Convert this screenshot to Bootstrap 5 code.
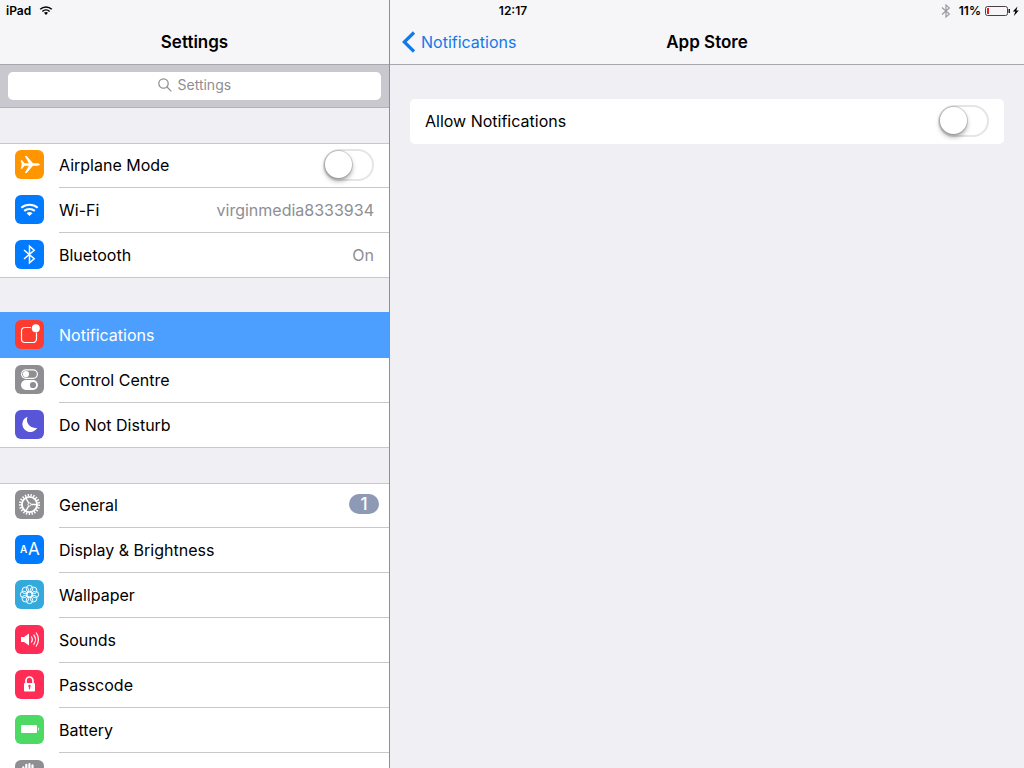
<!DOCTYPE html>
<html lang="en-GB">
<head>
<meta charset="utf-8">
<meta name="viewport" content="width=device-width, initial-scale=1">
<title>Settings</title>
<link href="https://cdn.jsdelivr.net/npm/bootstrap@5.3.0/dist/css/bootstrap.min.css" rel="stylesheet">
<style>
  body { font-family: Inter, Roboto, "Liberation Sans", sans-serif; font-size: 16px; line-height: 20px; color: #000; background: #efeff4; }
  .app { height: 100vh; }
  .status-bar { height: 21px; font-size: 12px; font-weight: 600; z-index: 5; padding: 0 4px 0 6px; }
  .status-bar > div { flex: 1 1 0; }
  .sidebar { flex: 0 0 390px; max-width: 50%; border-right: 1px solid #8e8e93; }
  .title-bar { height: 65px; padding-top: 20px; background: #f6f6f8; border-bottom: 1px solid #a7a7ac; flex: none; }
  .title-bar h1 { font-size: 17px; line-height: 20px; font-weight: 600; }
  .title-bar .back { color: #1279e8; left: 12px; }
  .search-bar { height: 43px; padding: 7px 8px; background: #c9c8ce; border-bottom: 1px solid #b3b2b8; flex: none; }
  .search-box { height: 28px; padding-bottom: 2px; background: #fff; border-radius: 5px; color: #8e8e93; gap: 6px; }
  .search-box input { width: 54px; padding: 0; border: 0; outline: 0; background: none; font-size: 14px; line-height: 16px; }
  .search-box input::placeholder { color: #8e8e93; opacity: 1; }
  .menu { overflow-y: auto; scrollbar-width: none; padding-top: 35px; }
  .menu::-webkit-scrollbar { display: none; }
  .menu-group { margin-bottom: 35px; background: #fff; box-shadow: inset 0 1px #c8c7cc, inset 0 -1px #c8c7cc; flex: none; }
  .menu-row { height: 45px; padding-left: 15px; gap: 15px; color: #000; text-decoration: none; }
  .menu-row > svg { flex: none; margin-bottom: 2px; }
  .row-body { height: 45px; padding-right: 15px; border-bottom: 1px solid #c8c7cc; min-width: 0; }
  .menu-row:last-child .row-body { border-color: transparent; }
  .menu-row.chosen { background: #4c9fff; color: #fff; box-shadow: 0 -1px #4c9fff; }
  .menu-row.chosen .row-body { border-color: #4c9fff; }
  .row-value { color: #8e8e93; }
  .row-body.has-count { padding-right: 10px; }
  .count { width: 30px; height: 20px; padding: 0; line-height: 20px; font-size: 17px; font-weight: 500; background: #8e9ab5; margin-bottom: 2px; }
  .detail { padding: 34px 20px; }
  .setting { height: 45px; padding: 0 15px 1px; background: #fff; border-radius: 5px; }
  .form-switch .form-check-input.toggle { width: 51px; height: 32px; margin: 0; float: none; border: 2px solid #e5e5e5; border-radius: 16px; background: #fff; position: relative; box-shadow: none; }
  .toggle::before { content: ""; position: absolute; left: 0; top: 0; width: 27px; height: 27px; border-radius: 50%; background: #fff; box-shadow: 0 0 0 1px rgba(0,0,0,.15), 0 3px 5px rgba(0,0,0,.35); }
  .form-switch .form-check-input.toggle:checked { background: #4cd964; border-color: #4cd964; }
  .toggle:checked::before { left: 20px; }
</style>
</head>
<body>
<div class="app d-flex position-relative overflow-hidden">

  <div class="status-bar position-absolute top-0 start-0 w-100 d-flex align-items-center">
    <div class="d-flex align-items-center gap-1">
      <span>iPad</span>
      <svg class="ms-1" width="14" height="11" viewBox="0 0 15 11" fill="none" stroke="#000" stroke-width="1.600"><path d="M1.300 4.200a9 9 0 0 1 12.400 0M3.600 6.500a5.700 5.700 0 0 1 7.800 0"/><path d="M5.300 8a3.400 3.400 0 0 1 4.400 0L7.500 10.300z" fill="#000" stroke="none"/></svg>
    </div>
    <time class="px-2">12:17</time>
    <div class="d-flex align-items-center justify-content-end">
      <svg class="me-1" width="10" height="14" viewBox="0 0 10 14" fill="none" stroke="#9b9b9f" stroke-width="1.200"><path d="M1 3.500l7.300 6.600L5 13V1l3.300 2.900L1 10.500"/></svg>
      <span class="ms-1">11%</span>
      <svg class="ms-1" width="35" height="12" viewBox="0 0 35 12"><rect x=".5" y="1.500" width="22" height="9" rx="2" fill="none" stroke="#4a3f42"/><rect x="2" y="3" width="2" height="6" fill="#d8232a"/><path d="M23.500 4h1.500v4h-1.500z" fill="#222"/><path d="M32.500 1.500l-4.700 5h2.500l-1.500 4.500 5-5.500h-2.500z" fill="#000"/></svg>
    </div>
  </div>

  <nav class="sidebar d-flex flex-column" aria-label="Settings">
    <header class="title-bar d-flex align-items-center justify-content-center"><h1 class="m-0">Settings</h1></header>
    <div class="search-bar">
      <label class="search-box d-flex align-items-center justify-content-center">
        <svg width="14" height="14" viewBox="0 0 14 14" fill="none" stroke="#8e8e93" stroke-width="1.200"><circle cx="5.500" cy="5.500" r="4.700"/><path d="M9 9l4.300 4.300"/></svg>
        <input type="text" placeholder="Settings" aria-label="Search settings">
      </label>
    </div>

    <div class="menu d-flex flex-column flex-grow-1">
      <div class="menu-group">
        <div class="menu-row d-flex align-items-center">
          <svg width="29" height="29" viewBox="0 0 29 29"><rect width="29" height="29" rx="6" fill="#ff9500"/><path fill="#fff" d="M5.700 10.200h1.400l2.500 3.100h4.200L9.800 6h1.900l6.300 7.300h4.300c1.500 0 2.600.6 2.600 1.200s-1.100 1.200-2.600 1.200H18L11.700 23H9.800l4-7.300H9.600l-2.500 3.100H5.700l1-4.300z"/></svg>
          <div class="row-body form-switch d-flex flex-grow-1 align-items-center justify-content-between ps-0">
            <label for="airplane">Airplane Mode</label>
            <input class="form-check-input toggle" type="checkbox" role="switch" id="airplane">
          </div>
        </div>
        <a href="#" class="menu-row d-flex align-items-center">
          <svg width="29" height="29" viewBox="0 0 29 29"><rect width="29" height="29" rx="6" fill="#007aff"/><g fill="none" stroke="#fff" stroke-width="2.100"><path d="M6.300 12.800a12.600 12.600 0 0 1 16.400 0M9.200 15.900a8.200 8.200 0 0 1 10.600 0"/></g><path fill="#fff" d="M11.500 18.200a4.700 4.700 0 0 1 6 0l-3 2.900z"/></svg>
          <div class="row-body d-flex flex-grow-1 align-items-center justify-content-between"><span>Wi-Fi</span><span class="row-value">virginmedia8333934</span></div>
        </a>
        <a href="#" class="menu-row d-flex align-items-center">
          <svg width="29" height="29" viewBox="0 0 29 29"><rect width="29" height="29" rx="6" fill="#007aff"/><path fill="none" stroke="#fff" stroke-width="1.500" d="M9 10l10.200 8.800-4.700 4V6.200l4.700 4L9 19"/></svg>
          <div class="row-body d-flex flex-grow-1 align-items-center justify-content-between"><span>Bluetooth</span><span class="row-value">On</span></div>
        </a>
      </div>

      <div class="menu-group">
        <a href="#" class="menu-row chosen d-flex align-items-center" aria-current="page">
          <svg width="29" height="29" viewBox="0 0 29 29"><rect width="29" height="29" rx="6" fill="#ff3b30"/><path fill="none" stroke="#fff" stroke-width="1.200" d="M16 7.500H10a3.500 3.500 0 0 0-3.500 3.500v8a3.500 3.500 0 0 0 3.500 3.500h8a3.500 3.500 0 0 0 3.500-3.500v-6.500"/><circle cx="20.800" cy="8.200" r="4" fill="#fff"/></svg>
          <div class="row-body d-flex flex-grow-1 align-items-center"><span>Notifications</span></div>
        </a>
        <a href="#" class="menu-row d-flex align-items-center">
          <svg width="29" height="29" viewBox="0 0 29 29"><rect width="29" height="29" rx="6" fill="#8e8e93"/><rect x="6.600" y="4.800" width="15.800" height="8.600" rx="4.300" fill="none" stroke="#fff" stroke-width="1.200"/><circle cx="11" cy="9.100" r="3.100" fill="#fff"/><rect x="6" y="15" width="17" height="10" rx="5" fill="#fff"/><circle cx="18" cy="20" r="3.100" fill="#8e8e93"/></svg>
          <div class="row-body d-flex flex-grow-1 align-items-center"><span>Control Centre</span></div>
        </a>
        <a href="#" class="menu-row d-flex align-items-center">
          <svg width="29" height="29" viewBox="0 0 29 29"><rect width="29" height="29" rx="6" fill="#5856d6"/><path fill="#fff" d="M12.500 6.700a7.900 7.900 0 1 0 9.800 11A8.300 8.300 0 0 1 12.500 6.700z"/></svg>
          <div class="row-body d-flex flex-grow-1 align-items-center"><span>Do Not Disturb</span></div>
        </a>
      </div>

      <div class="menu-group">
        <a href="#" class="menu-row d-flex align-items-center">
          <svg width="29" height="29" viewBox="0 0 29 29"><rect width="29" height="29" rx="6" fill="#8e8e93"/><g fill="none" stroke="#fff"><circle cx="14.500" cy="14.500" r="9.400" stroke-width="2.400" stroke-dasharray="1.400 1.412"/><circle cx="14.500" cy="14.500" r="7.600" stroke-width="1.900"/><circle cx="14.500" cy="14.500" r="1.500" stroke-width="1"/><path stroke-width="1.400" d="M16.200 14.500h5.500M13.700 13l-3-5.200M13.700 16l-3 5.200"/></g></svg>
          <div class="row-body has-count d-flex flex-grow-1 align-items-center justify-content-between"><span>General</span><span class="badge rounded-pill count">1</span></div>
        </a>
        <a href="#" class="menu-row d-flex align-items-center">
          <svg width="29" height="29" viewBox="0 0 29 29" fill="#fff" font-family="Inter, sans-serif"><rect width="29" height="29" rx="6" fill="#007aff"/><text x="5" y="18" font-size="10" font-weight="600">A</text><text x="13" y="20" font-size="17">A</text></svg>
          <div class="row-body d-flex flex-grow-1 align-items-center"><span>Display &amp; Brightness</span></div>
        </a>
        <a href="#" class="menu-row d-flex align-items-center">
          <svg width="29" height="29" viewBox="0 0 29 29"><rect width="29" height="29" rx="6" fill="#34aadc"/><g fill="none" stroke="#fff" stroke-width="1"><circle cx="14.500" cy="14.500" r="2.600"/><circle cx="14.500" cy="8.700" r="3.300"/><circle cx="18.600" cy="10.400" r="3.300"/><circle cx="20.300" cy="14.500" r="3.300"/><circle cx="18.600" cy="18.600" r="3.300"/><circle cx="14.500" cy="20.300" r="3.300"/><circle cx="10.400" cy="18.600" r="3.300"/><circle cx="8.700" cy="14.500" r="3.300"/><circle cx="10.400" cy="10.400" r="3.300"/></g></svg>
          <div class="row-body d-flex flex-grow-1 align-items-center"><span>Wallpaper</span></div>
        </a>
        <a href="#" class="menu-row d-flex align-items-center">
          <svg width="29" height="29" viewBox="0 0 29 29"><rect width="29" height="29" rx="6" fill="#ff2d55"/><path fill="#fff" d="M6 12h3l5-3.500v12L9 17H6z"/><path fill="none" stroke="#fff" stroke-width="1.200" d="M16.200 11.500a5 5 0 0 1 0 6M18.600 9.500a8 8 0 0 1 0 10M21 7.500a11.500 11.500 0 0 1 0 14"/></svg>
          <div class="row-body d-flex flex-grow-1 align-items-center"><span>Sounds</span></div>
        </a>
        <a href="#" class="menu-row d-flex align-items-center">
          <svg width="29" height="29" viewBox="0 0 29 29"><rect width="29" height="29" rx="6" fill="#ff2d55"/><path fill="none" stroke="#fff" stroke-width="1.700" d="M11 14v-3.500a3.500 3.500 0 0 1 7 0V14"/><rect x="9" y="13" width="11" height="8.500" rx=".8" fill="#fff"/><path fill="#ff2d55" d="M14.500 14.700a1.300 1.300 0 0 1 .6 2.400v2.200h-1.200v-2.200a1.300 1.300 0 0 1 .6-2.400z"/></svg>
          <div class="row-body d-flex flex-grow-1 align-items-center"><span>Passcode</span></div>
        </a>
        <a href="#" class="menu-row d-flex align-items-center">
          <svg width="29" height="29" viewBox="0 0 29 29"><rect width="29" height="29" rx="6" fill="#4cd964"/><rect x="6" y="10" width="16" height="8" rx="1" fill="#fff"/><path fill="#fff" d="M23.200 12.200a2.400 2.400 0 0 1 0 3.800z"/></svg>
          <div class="row-body d-flex flex-grow-1 align-items-center"><span>Battery</span></div>
        </a>
        <a href="#" class="menu-row d-flex align-items-center" aria-label="Privacy">
          <svg width="29" height="29" viewBox="0 0 29 29"><rect width="29" height="29" rx="6" fill="#8e8e93"/><path fill="none" stroke="#fff" stroke-width="2.200" stroke-linecap="round" d="M8.300 14V7.300M11.300 14V4.800M14.400 14V4.200M17.500 14V5.300M21 17v-3"/><path fill="#fff" d="M7.500 11h11v5l2.500-2 1 1-4 7a5 5 0 0 1-4 2.500c-4 0-6.500-2.500-6.500-6.500z"/></svg>
          <div class="row-body flex-grow-1"></div>
        </a>
      </div>
    </div>
  </nav>

  <main class="flex-grow-1">
    <header class="title-bar d-flex align-items-center justify-content-center position-relative">
      <a href="#" class="back position-absolute d-flex align-items-center text-decoration-none">
        <svg class="me-1" width="15" height="22" viewBox="0 0 15 22" fill="none" stroke="#1279e8" stroke-width="3.200"><path d="M12 1.500L2.300 11l9.700 9.500"/></svg>
        <span>Notifications</span>
      </a>
      <h1 class="m-0">App Store</h1>
    </header>
    <div class="detail">
      <div class="setting form-switch d-flex align-items-center justify-content-between">
        <label for="allow">Allow Notifications</label>
        <input class="form-check-input toggle" type="checkbox" role="switch" id="allow">
      </div>
    </div>
  </main>
</div>
<script src="https://cdn.jsdelivr.net/npm/bootstrap@5.3.0/dist/js/bootstrap.bundle.min.js"></script>
</body>
</html>
